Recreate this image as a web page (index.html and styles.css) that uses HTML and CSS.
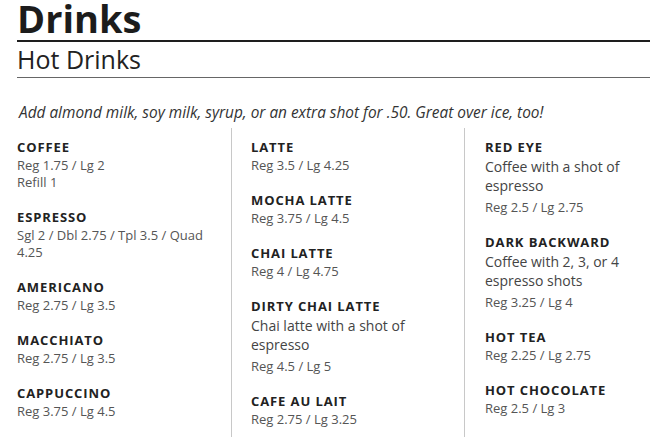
FILE: index.html
```html
<!DOCTYPE html>
<html>
<head>
<meta charset="utf-8">
<link rel="stylesheet" href="styles.css">
</head>
<body>
<div class="menu">
  <h1 class="title">Drinks</h1>
  <h2 class="subtitle">Hot Drinks</h2>
  <p class="note">Add almond milk, soy milk, syrup, or an extra shot for .50. Great over ice, too!</p>
  <div class="cols">
    <div class="col col-first">
      <div class="item"><div class="name">COFFEE</div><div class="price">Reg 1.75 / Lg 2<br>Refill 1</div></div>
      <div class="item"><div class="name">ESPRESSO</div><div class="price">Sgl 2 / Dbl 2.75 / Tpl 3.5 / Quad 4.25</div></div>
      <div class="item"><div class="name">AMERICANO</div><div class="price">Reg 2.75 / Lg 3.5</div></div>
      <div class="item"><div class="name">MACCHIATO</div><div class="price">Reg 2.75 / Lg 3.5</div></div>
      <div class="item"><div class="name">CAPPUCCINO</div><div class="price">Reg 3.75 / Lg 4.5</div></div>
    </div>
    <div class="col col-mid">
      <div class="item"><div class="name">LATTE</div><div class="price">Reg 3.5 / Lg 4.25</div></div>
      <div class="item"><div class="name">MOCHA LATTE</div><div class="price">Reg 3.75 / Lg 4.5</div></div>
      <div class="item"><div class="name">CHAI LATTE</div><div class="price">Reg 4 / Lg 4.75</div></div>
      <div class="item"><div class="name">DIRTY CHAI LATTE</div><div class="desc">Chai latte with a shot of espresso</div><div class="price">Reg 4.5 / Lg 5</div></div>
      <div class="item"><div class="name">CAFE AU LAIT</div><div class="price">Reg 2.75 / Lg 3.25</div></div>
    </div>
    <div class="col col-last">
      <div class="item"><div class="name">RED EYE</div><div class="desc">Coffee with a shot of espresso</div><div class="price">Reg 2.5 / Lg 2.75</div></div>
      <div class="item"><div class="name">DARK BACKWARD</div><div class="desc">Coffee with 2, 3, or 4 espresso shots</div><div class="price">Reg 3.25 / Lg 4</div></div>
      <div class="item"><div class="name">HOT TEA</div><div class="price">Reg 2.25 / Lg 2.75</div></div>
      <div class="item"><div class="name">HOT CHOCOLATE</div><div class="price">Reg 2.5 / Lg 3</div></div>
    </div>
  </div>
</div>
</body>
</html>
```

FILE: styles.css
```css
html, body {
  margin: 0;
  padding: 0;
  background: #fff;
}
body {
  font-family: "Open Sans", "Noto Sans", sans-serif;
  color: #222;
  overflow: hidden;
}
.menu {
  padding-left: 17px;
}
.title {
  margin: 0;
  font-size: 38px;
  font-weight: 700;
  line-height: 36px;
  padding-bottom: 4px;
  border-bottom: 2px solid #1e1e1e;
  color: #1c1c1c;
}
.subtitle {
  margin: 2px 0 0;
  font-size: 25px;
  font-weight: 400;
  line-height: 30px;
  padding-bottom: 3px;
  border-bottom: 1px solid #666;
  color: #222;
}
.note {
  margin: 25px 0 0 2px;
  font-size: 15.4px;
  font-style: italic;
  line-height: 20px;
  color: #333;
}
.cols {
  display: grid;
  grid-template-columns: 214px 233px 1fr;
  margin-top: 5px;
}
.col {
  display: flex;
  flex-direction: column;
  gap: 16px;
  padding: 9px 20px 9px 0;
}
.col-mid {
  border-left: 1px solid #c8c8c8;
  padding-left: 19px;
}
.col-last {
  border-left: 1px solid #c8c8c8;
  padding-left: 20px;
}
.name {
  font-size: 13px;
  font-weight: 700;
  letter-spacing: 0.9px;
  line-height: 20px;
  color: #222;
}
.desc {
  font-size: 14px;
  line-height: 19px;
  color: #444;
  margin-bottom: 4px;
}
.price {
  font-size: 13px;
  line-height: 17px;
  color: #555;
}
```
